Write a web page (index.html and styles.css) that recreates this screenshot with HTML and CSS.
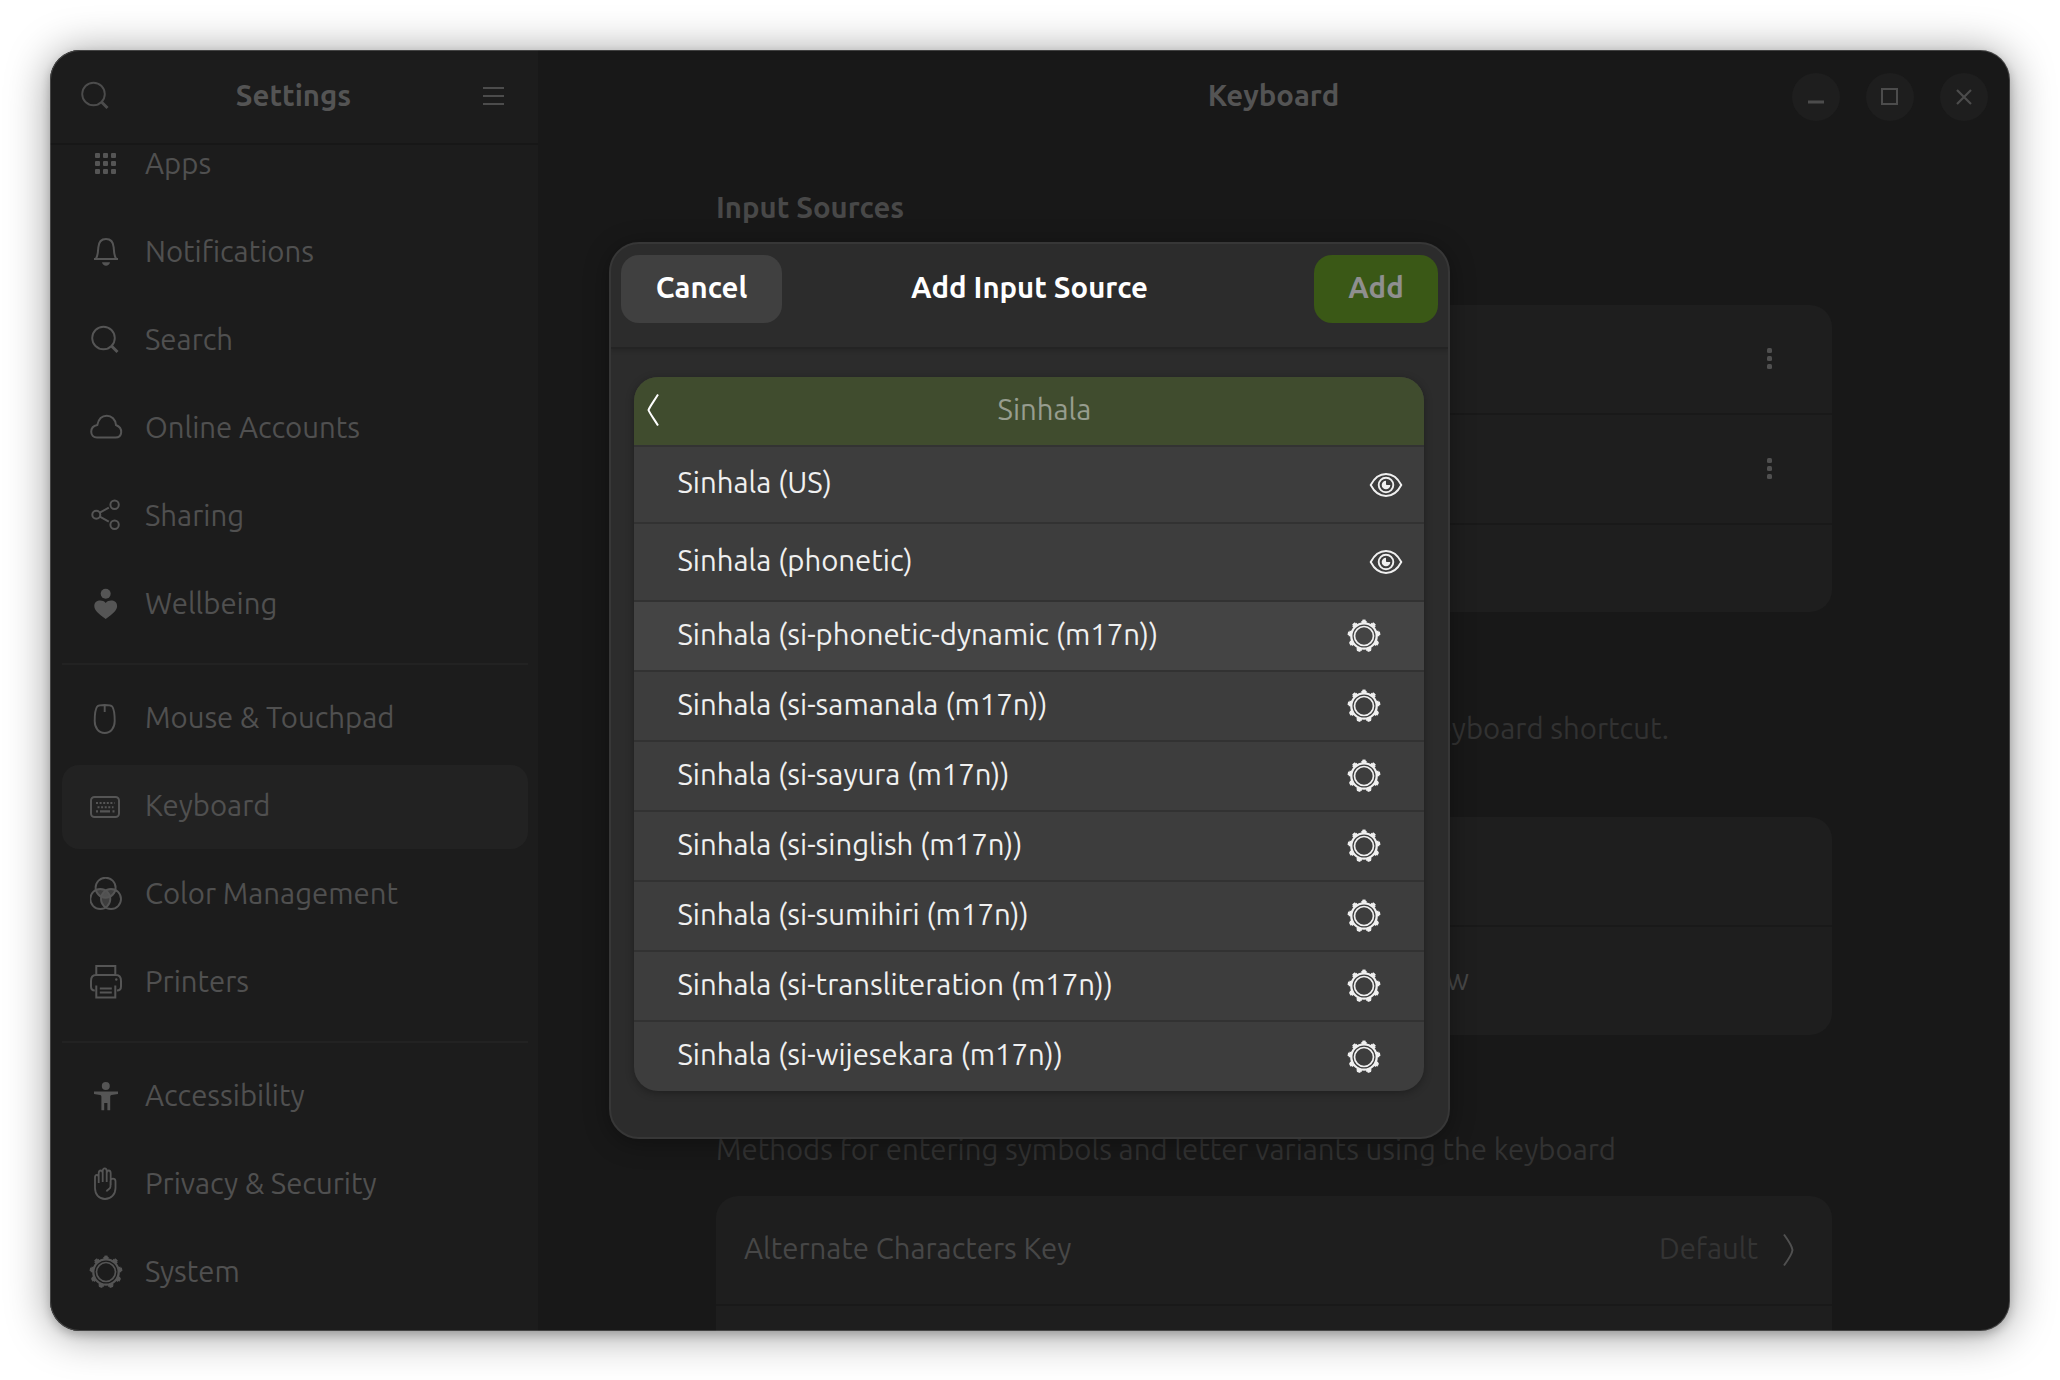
FILE: index.html
```html
<!DOCTYPE html>
<html lang="en">
<head>
<meta charset="utf-8">
<title>Settings – Keyboard</title>
<link rel="stylesheet" href="styles.css">
</head>
<body>
<svg class="defs" width="0" height="0" aria-hidden="true">
  <defs>
    <symbol id="i-apps" viewBox="0 0 34 34"><g fill="currentColor"><rect x="5" y="6" width="5" height="5" rx="1"/><rect x="13" y="6" width="5" height="5" rx="1"/><rect x="21" y="6" width="5" height="5" rx="1"/><rect x="5" y="14" width="5" height="5" rx="1"/><rect x="13" y="14" width="5" height="5" rx="1"/><rect x="21" y="14" width="5" height="5" rx="1"/><rect x="5" y="22" width="5" height="5" rx="1"/><rect x="13" y="22" width="5" height="5" rx="1"/><rect x="21" y="22" width="5" height="5" rx="1"/></g></symbol>
    <symbol id="i-bell" viewBox="0 0 34 34"><path d="M4 24h24M6 23.500c2-3 2-7 2.300-11C8.700 7 11.500 4 16 4s7.300 3 7.700 8.500c.3 4 .3 8 2.300 11" fill="none" stroke="currentColor" stroke-width="2"/><path d="M12 27.300h8c-.6 4.500-7.400 4.500-8 0z" fill="currentColor"/></symbol>
    <symbol id="i-search" viewBox="0 0 34 34"><circle cx="13.500" cy="15" r="11.300" fill="none" stroke="currentColor" stroke-width="1.900"/><path d="M21.500 23l6 6" stroke="currentColor" stroke-width="3"/></symbol>
    <symbol id="i-cloud" viewBox="0 0 34 34"><path d="M7 26.500c-7.500 0-8-11 .3-12.500C8.500 8 12 4.700 16.800 4.700S25.500 8.500 26 14c7.500 3 6.500 12.500-.5 12.500z" fill="none" stroke="currentColor" stroke-width="2"/></symbol>
    <symbol id="i-share" viewBox="0 0 34 34"><g fill="none" stroke="currentColor" stroke-width="2"><circle cx="6.300" cy="15.700" r="4"/><circle cx="24.600" cy="5.700" r="4.200"/><circle cx="24.600" cy="25.700" r="4.200"/><path d="M9.800 13.700l9-5M9.800 17.700l9 5"/></g></symbol>
    <symbol id="i-well" viewBox="0 0 34 34"><circle cx="15.700" cy="6.700" r="5" fill="currentColor"/><path d="M15.700 32C8 26.500 4.300 23 4.300 19c0-6 8-7 11.400-3 3.400-4 11.400-3 11.400 3 0 4-3.700 7.500-11.400 13z" fill="currentColor"/></symbol>
    <symbol id="i-mouse" viewBox="0 0 34 34"><path d="M14.700 4c5 0 6.300 0 7.500 1.500 1.800 2.500 2.500 9 2.500 14.500 0 7-4 12-10 12s-10-5-10-12c0-5.500.7-12 2.500-14.500C8.400 4 9.700 4 14.700 4zM14.700 4v7" fill="none" stroke="currentColor" stroke-width="1.900"/></symbol>
    <symbol id="i-keyboard" viewBox="0 0 34 34"><rect x="1" y="8" width="28" height="20" rx="3.500" fill="none" stroke="currentColor" stroke-width="2"/><path d="M6 14h18.500M7.500 18.200h16" stroke="currentColor" stroke-width="2" stroke-dasharray="2 1.600"/><path d="M6 22.300h2M10 22.300h10M22.500 22.300h2" stroke="currentColor" stroke-width="2.200"/></symbol>
    <symbol id="i-color" viewBox=".7 0 34 34">
      <clipPath id="c-top"><circle cx="16.300" cy="10.700" r="10.300"/></clipPath><clipPath id="c-left"><circle cx="11" cy="22" r="10.300"/></clipPath>
      <g fill="currentColor" fill-opacity=".6"><circle cx="11" cy="22" r="10.300" clip-path="url(#c-top)"/><circle cx="21.700" cy="22" r="10.300" clip-path="url(#c-top)"/><circle cx="21.700" cy="22" r="10.300" clip-path="url(#c-left)"/></g>
      <g fill="none" stroke="currentColor" stroke-width="1.900"><circle cx="16.300" cy="10.700" r="10"/><circle cx="11" cy="22" r="10"/><circle cx="21.700" cy="22" r="10"/></g></symbol>
    <symbol id="i-printer" viewBox=".7 0 34 34"><g fill="none" stroke="currentColor" stroke-width="2"><path d="M7 10V1h19v9M5.500 25.500C2.700 25.500 1.700 24 1.700 21.500V16c0-4 2-6 5-6h20c3 0 5 2 5 6v5.500c0 2.500-1 4-4 4"/><path d="M7 20.500V32.500h19V20.500M10.500 23.500h12M10.500 27.500h12"/></g><circle cx="27" cy="14.500" r="1.200" fill="currentColor"/></symbol>
    <symbol id="i-access" viewBox="0 0 34 34"><g fill="currentColor"><circle cx="15.800" cy="7" r="4"/><path d="M4 12.500h24V15l-6.500 1c-1 .2-1.300 1-1.300 2v13.300h-2.800V24h-3.200v7.300h-2.800V18c0-1-.3-1.800-1.300-2L4 15z"/></g></symbol>
    <symbol id="i-hand" viewBox="0 0 34 34"><path d="M5 17V10.500c0-3.500 3.700-3.500 3.700 0V16M8.700 15V6.500c0-4 4-4 4 0V15M12.700 6V4c0-3.500 4-3.500 4 0v11M16.700 6.500c0-4 4-4 4 0V18M16.500 24.500c1-2.500 4-2 4-5V14c.3-3.200 4.700-3.200 5 0v7c0 6.500-4.500 11-10.500 11S5 27.500 5 21v-5" fill="none" stroke="currentColor" stroke-width="1.800"/></symbol>
    <symbol id="i-gear" viewBox="-17 -17 34 34"><g fill="none" stroke="currentColor"><circle r="9.500" stroke-width="1.700"/><circle r="12.700" stroke-width="2.300"/><circle r="14" stroke-width="2.600" pathLength="90" stroke-dasharray="5.400 4.600" stroke-dashoffset="2.700" transform="rotate(-90)"/><circle r="15.500" stroke-width="1.900" pathLength="90" stroke-dasharray="3.200 6.800" stroke-dashoffset="1.600" transform="rotate(-90)"/></g></symbol>
    <symbol id="i-eye" viewBox="-17 -17 34 34"><g fill="none" stroke="currentColor" stroke-width="1.900"><path d="M-15.300 0C-11.500-7.300-6-11 0-11S11.500-7.300 15.300 0C11.500 7.300 6 11 0 11S-11.500 7.300-15.300 0z"/><circle r="7.300"/></g><path d="M0-4.300A4.300 4.300 0 1 0 4.300 0H.8A.8.800 0 0 1 0-.8z" fill="currentColor"/></symbol>
  </defs>
</svg>

<div class="window">
  <aside class="sidebar">
    <header class="sidebar-header">
      <svg class="icon"><use href="#i-search"/></svg>
      <h1 class="title">Settings</h1>
      <span class="burger"><i></i><i></i><i></i></span>
    </header>
    <nav class="nav">
      <a class="item"><svg class="icon"><use href="#i-apps"/></svg><span>Apps</span></a>
      <a class="item"><svg class="icon"><use href="#i-bell"/></svg><span>Notifications</span></a>
      <a class="item"><svg class="icon"><use href="#i-search"/></svg><span>Search</span></a>
      <a class="item"><svg class="icon"><use href="#i-cloud"/></svg><span>Online Accounts</span></a>
      <a class="item"><svg class="icon"><use href="#i-share"/></svg><span>Sharing</span></a>
      <a class="item"><svg class="icon"><use href="#i-well"/></svg><span>Wellbeing</span></a>
      <hr class="rule">
      <a class="item"><svg class="icon"><use href="#i-mouse"/></svg><span>Mouse &amp; Touchpad</span></a>
      <a class="item selected"><svg class="icon"><use href="#i-keyboard"/></svg><span>Keyboard</span></a>
      <a class="item"><svg class="icon"><use href="#i-color"/></svg><span>Color Management</span></a>
      <a class="item"><svg class="icon"><use href="#i-printer"/></svg><span>Printers</span></a>
      <hr class="rule">
      <a class="item"><svg class="icon"><use href="#i-access"/></svg><span>Accessibility</span></a>
      <a class="item"><svg class="icon"><use href="#i-hand"/></svg><span>Privacy &amp; Security</span></a>
      <a class="item"><svg class="icon gear"><use href="#i-gear"/></svg><span>System</span></a>
    </nav>
  </aside>

  <main class="main">
    <header class="main-header">
      <h1 class="title">Keyboard</h1>
      <div class="controls">
        <span class="control"><svg width="16" height="16"><path d="M0 13h16" stroke="currentColor" stroke-width="3"/></svg></span>
        <span class="control"><svg width="17" height="17"><rect x="1" y="1" width="15" height="15" fill="none" stroke="currentColor" stroke-width="2"/></svg></span>
        <span class="control"><svg width="16" height="16"><path d="M1 1l14 14M15 1L1 15" stroke="currentColor" stroke-width="2.200"/></svg></span>
      </div>
    </header>
    <div class="content">
      <h2 class="heading">Input Sources</h2>
      <section class="card sources">
        <div class="row"><span class="dots"><i></i><i></i><i></i></span></div>
        <div class="row"><span class="dots"><i></i><i></i><i></i></span></div>
        <div class="row short"></div>
      </section>
      <p class="hint shortcut">keyboard shortcut.</p>
      <section class="card switching">
        <div class="row"></div>
        <div class="row"><span class="each">window</span></div>
      </section>
      <p class="hint methods">Methods for entering symbols and letter variants using the keyboard</p>
      <section class="card special">
        <div class="row"><span class="key">Alternate Characters Key</span><span class="value">Default</span><svg class="chev" width="12" height="34"><path d="M1 1.500q8 11 8.500 15.500-.5 4.500-8.500 15.500" fill="none" stroke="currentColor" stroke-width="2"/></svg></div>
        <div class="row"></div>
      </section>
    </div>
  </main>

  <div class="dialog" role="dialog">
    <header class="dialog-header">
      <button class="button cancel">Cancel</button>
      <h2 class="dialog-title">Add Input Source</h2>
      <button class="button add">Add</button>
    </header>
    <div class="list">
      <div class="back"><svg width="14" height="34"><path d="M12 1.500C8 8 3.500 14 2.500 17 3.500 20 8 26 12 32.500" fill="none" stroke="currentColor" stroke-width="2"/></svg><span>Sinhala</span></div>
      <div class="entry tall first"><span>Sinhala (US)</span><svg class="icon"><use href="#i-eye"/></svg></div>
      <div class="entry tall"><span>Sinhala (phonetic)</span><svg class="icon"><use href="#i-eye"/></svg></div>
      <div class="entry hover"><span>Sinhala (si-phonetic-dynamic (m17n))</span><svg class="icon"><use href="#i-gear"/></svg></div>
      <div class="entry"><span>Sinhala (si-samanala (m17n))</span><svg class="icon"><use href="#i-gear"/></svg></div>
      <div class="entry"><span>Sinhala (si-sayura (m17n))</span><svg class="icon"><use href="#i-gear"/></svg></div>
      <div class="entry"><span>Sinhala (si-singlish (m17n))</span><svg class="icon"><use href="#i-gear"/></svg></div>
      <div class="entry"><span>Sinhala (si-sumihiri (m17n))</span><svg class="icon"><use href="#i-gear"/></svg></div>
      <div class="entry"><span>Sinhala (si-transliteration (m17n))</span><svg class="icon"><use href="#i-gear"/></svg></div>
      <div class="entry"><span>Sinhala (si-wijesekara (m17n))</span><svg class="icon"><use href="#i-gear"/></svg></div>
    </div>
  </div>
</div>
</body>
</html>
```

FILE: styles.css
```css
* { box-sizing: border-box; }

body {
  margin: 0;
  padding: 50px;
  width: 2060px;
  height: 1380px;
  overflow: hidden;
  background: #fff;
  font: 400 29.330px/40px Ubuntu, "Noto Sans", sans-serif;
  white-space: nowrap;
}

h1, h2, p { margin: 0; }
.defs { position: absolute; }

.window {
  position: relative;
  display: flex;
  width: 1960px;
  height: 1281px;
  border-radius: 30px;
  background: #181818;
  box-shadow: 0 4px 10px rgba(0, 0, 0, .2), 0 3px 44px rgba(0, 0, 0, .4);
}
.window::after {
  content: "";
  position: absolute;
  inset: 0;
  border-radius: 30px;
  box-shadow: inset 0 0 0 1px rgba(255, 255, 255, .18);
  pointer-events: none;
}

.icon { width: 34px; height: 34px; flex: none; display: block; }

/* Sidebar */
.sidebar {
  display: flex;
  flex-direction: column;
  width: 488px;
  border-radius: 30px 0 0 30px;
  background: #1c1c1c;
  color: #505050;
  overflow: hidden;
}
.sidebar-header {
  display: grid;
  grid-template-columns: 34px 1fr 21px;
  align-items: center;
  flex: none;
  height: 95px;
  padding: 0 34px 1px 30px;
  border-bottom: 2px solid #171717;
}
.title, .heading, .dialog-title, .button { font-size: 29.330px; font-weight: 700; line-height: 40px; }
.title { color: #545454; }
.sidebar-header .icon { color: #4c4c4c; }
.sidebar-header .title { padding-right: 10px; text-align: center; }
.burger { display: flex; flex-direction: column; gap: 6px; width: 21px; }
.burger i { height: 2px; background: #4c4c4c; }

.nav { flex: 1; min-height: 0; overflow: hidden; padding: 0 10px 0 12px; }
.item {
  display: flex;
  align-items: center;
  gap: 21px;
  height: 84px;
  margin-bottom: 4px;
  padding: 0 27px 3px 28px;
  border-radius: 17px;
}
.item:first-child { margin-top: -22px; }
.item .icon { color: #555; }
.item .gear { margin: 0 1px 0 -1px; }
.selected { background: #222; }
.rule { height: 2px; margin: 16px 0 12px; border: 0; background: #222; }

/* Main page */
.main { flex: 1; min-width: 0; display: flex; flex-direction: column; overflow: hidden; border-radius: 0 30px 30px 0; }
.main-header {
  display: grid;
  grid-template-columns: 1fr auto 1fr;
  align-items: center;
  flex: none;
  height: 93px;
}
.main-header .title { grid-column: 2; padding: 0 1px 1px 0; }
.controls { display: flex; justify-content: flex-end; gap: 26px; padding-right: 22.500px; }
.control {
  display: flex;
  align-items: center;
  justify-content: center;
  width: 48px;
  height: 48px;
  border-radius: 50%;
  background: #1e1e1e;
  color: #4c4c4c;
}
.content { flex: 1; min-height: 0; width: 1116px; margin-left: 178px; padding-top: 45px; }
.heading { color: #484848; }
.card { border-radius: 22px; background: #1e1e1e; color: #474747; }
.row { display: flex; align-items: center; height: 110px; padding: 0 28px 3px; border-bottom: 2px solid #191919; }
.row:last-child { border-bottom: 0; }
.sources { margin-top: 77px; }
.sources .row { justify-content: flex-end; padding: 0 60px 2px 0; }
.sources .short { height: 87px; }
.dots { display: flex; flex-direction: column; gap: 3px; }
.dots i { width: 5px; height: 5px; border-radius: 1.500px; background: #505050; }
.hint { color: #323232; }
.shortcut { width: 953px; margin-top: 97px; text-align: right; }
.switching { margin-top: 68px; }
.switching .row:last-child { height: 108px; }
.each { width: 725px; text-align: right; }
.methods { margin-top: 95px; }
.special { margin-top: 26px; border-radius: 22px 22px 0 0; }
.key { flex: 1; }
.value { color: #343434; }
.chev { margin: 3px 9px 0 25px; color: #505050; }

/* Modal dialog over the page */
.dialog {
  position: absolute;
  left: 559px;
  top: 192px;
  width: 841px;
  height: 897px;
  border: 2px solid #373737;
  border-radius: 30px;
  background: #2c2c2c;
  color: #fff;
  box-shadow: 0 4px 24px rgba(0, 0, 0, .35);
  overflow: hidden;
}
.dialog-header {
  display: grid;
  grid-template-columns: 1fr auto 1fr;
  align-items: start;
  height: 105px;
  padding: 11px 10px 0;
  border-bottom: 2px solid #242424;
  box-shadow: 0 2px 4px rgba(0, 0, 0, .15);
}
.dialog-title { line-height: 66px; }
.button {
  height: 68px;
  border: 0;
  border-radius: 18px;
  padding: 0 0 2px;
  font-family: inherit;
}
.cancel { width: 161px; background: #404040; color: #fff; }
.add { justify-self: end; width: 124px; background: #3a5816; color: #8f8f8f; }

.list {
  width: 790px;
  margin: 28px 0 0 23px;
  border-radius: 24px;
  background: #3d3d3d;
  box-shadow: 0 2px 8px rgba(0, 0, 0, .3);
  overflow: hidden;
}
.back {
  display: grid;
  grid-template-columns: 14px 1fr 0;
  align-items: center;
  height: 70px;
  padding: 0 0 2px 12px;
  border-bottom: 2px solid #333;
  background: #404c2e;
  color: #fff;
}
.back span { margin: -1px 0 0 5px; text-align: center; color: #979d8f; }
.entry {
  display: flex;
  align-items: center;
  justify-content: space-between;
  height: 70px;
  padding: 0 43px 0 43.500px;
  border-bottom: 2px solid #323232;
  color: #f0f0f0;
}
.entry span { margin-top: -3px; }
.entry:last-child { height: 69px; border-bottom: 0; }
.tall { height: 78px; padding-right: 21px; }
.first { height: 77px; }
.hover { background: #444; }
```
